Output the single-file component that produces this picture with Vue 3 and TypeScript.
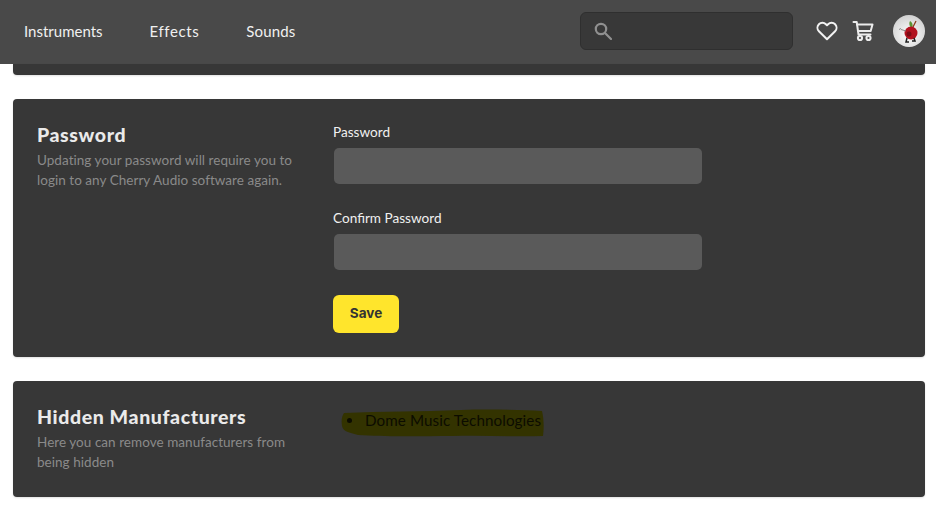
<script setup lang="ts">
const navItems: string[] = ['Instruments', 'Effects', 'Sounds']
</script>

<template>
  <div class="page">
    <header class="topbar">
      <nav class="nav">
        <a v-for="item in navItems" :key="item" class="nav-link">{{ item }}</a>
      </nav>
      <div class="tools">
        <div class="search">
          <svg class="search-icon" viewBox="0 0 18 18" width="18" height="18" fill="none" stroke="#909090" stroke-width="2.2">
            <circle cx="7" cy="7" r="5.2" />
            <path d="M11 11l6 6" stroke-linecap="round" />
          </svg>
        </div>
        <svg class="heart" viewBox="0 0 22 20" width="22" height="20" fill="none" stroke="#f2f2f2" stroke-width="2" stroke-linejoin="round">
          <path d="M11 18.2 2.9 10.2a5 5 0 0 1 0-7 4.9 4.9 0 0 1 7 0L11 4.3l1.1-1.1a4.9 4.9 0 0 1 7 0 5 5 0 0 1 0 7z" />
        </svg>
        <svg class="cart" viewBox="0 0 22 22" width="22" height="22" fill="none" stroke="#ececec" stroke-width="2" stroke-linejoin="round" stroke-linecap="round">
          <path d="M1.5 2h3.2l1.8 12.5h12" />
          <path d="M5 4.5h15.5l-1.8 6.5H6" />
          <circle cx="8" cy="18" r="2.1" />
          <circle cx="16.5" cy="18" r="2.1" />
        </svg>
        <svg class="avatar" viewBox="0 0 32 32" width="32" height="32">
          <defs>
            <radialGradient id="avatarBg" cx="50%" cy="62%" r="60%">
              <stop offset="0%" stop-color="#ffffff" />
              <stop offset="100%" stop-color="#d2d2d2" />
            </radialGradient>
          </defs>
          <circle cx="16" cy="16" r="16" fill="url(#avatarBg)" />
          <path d="M17.5 12c-1.500-2-1.500-4-.5-6 2 1 3 3 2.500 6z" fill="#5b9432" />
          <path d="M20 12l3-6" stroke="#8a3a1a" stroke-width="1.300" />
          <circle cx="18" cy="18" r="6.500" fill="#b2121f" />
          <circle cx="16" cy="19" r="2.500" fill="#7c0c16" />
          <path d="M14 23l-1 4h3M21 23l1 3h-3" stroke="#1f1f1f" stroke-width="1.500" fill="none" />
          <path d="M13 16l-5-1.500M8 13.500l-2 1" stroke="#8a8a8a" stroke-width="1" fill="none" />
        </svg>
      </div>
    </header>

    <main class="content">
      <div class="card stub"></div>

      <section class="card password-card">
        <div class="side">
          <h2>Password</h2>
          <p>Updating your password will require you to login to any Cherry Audio software again.</p>
        </div>
        <form class="form" @submit.prevent>
          <label class="field">
            <span>Password</span>
            <input type="password" />
          </label>
          <label class="field">
            <span>Confirm Password</span>
            <input type="password" />
          </label>
          <button class="save" type="button">Save</button>
        </form>
      </section>

      <section class="card hidden-card">
        <div class="side narrow">
          <h2>Hidden Manufacturers</h2>
          <p>Here you can remove manufacturers from being hidden</p>
        </div>
        <div class="list-col">
          <svg class="blob" viewBox="0 0 204 30" width="204" height="30" preserveAspectRatio="none">
            <path d="M3 5C40 3 80 4 120 2c30-1 60 0 81 1 2 8 2 18 1 25-30 1-60-1-90 0-30 0-70 1-95-1C10 25 2 24 1 18 0 12 1 8 3 5z" fill="#333300" />
          </svg>
          <ul class="makers">
            <li>Dome Music Technologies</li>
          </ul>
        </div>
      </section>
    </main>
  </div>
</template>

<style>
html, body { margin: 0; background: #fff; }
</style>

<style scoped>
.page {
  width: 936px;
  height: 511px;
  overflow: hidden;
  font-family: "Lato", "Open Sans", sans-serif;
}
.topbar {
  height: 64px;
  box-sizing: border-box;
  background: #494949;
  display: flex;
  align-items: center;
  justify-content: space-between;
  padding: 0 11px 2px 24px;
}
.nav { display: flex; gap: 47px; }
.nav-link { color: #f0f0f0; font-size: 15px; }
.nav-link:nth-child(2) { letter-spacing: .6px; }
.nav-link:nth-child(3) { letter-spacing: .15px; }
.tools { display: flex; align-items: center; }
.search {
  width: 213px;
  height: 38px;
  box-sizing: border-box;
  background: #383838;
  border: 1px solid #2f2f2f;
  border-radius: 6px;
  display: flex;
  align-items: center;
  padding-left: 13px;
}
.heart { margin-left: 23px; }
.cart { margin-left: 14px; }
.avatar { margin-left: 19px; }
.content { padding: 0 11px 0 13px; }
.card {
  background: #373737;
  border-radius: 4px;
  color: #eee;
  box-shadow: 0 1px 2px rgba(0,0,0,.12);
}
.stub { height: 11px; border-radius: 0 0 4px 4px; margin-bottom: 24px; }
.password-card {
  height: 258px;
  box-sizing: border-box;
  display: flex;
  padding: 24px;
  margin-bottom: 24px;
}
.hidden-card {
  height: 116px;
  box-sizing: border-box;
  display: flex;
  padding: 24px;
}
.side { width: 296px; flex: none; }
.side h2 { margin: 0 0 3px; font-size: 19.5px; font-weight: 900; line-height: 24px; color: #eaeaea; letter-spacing: .6px; }
.side p { margin: 0; font-size: 13.5px; line-height: 20px; color: #8a8a8a; letter-spacing: .04px; }
.password-card .side p { width: 262px; }
.narrow p { width: 256px; }
.form { display: flex; flex-direction: column; width: 370px; }
.field { display: flex; flex-direction: column; margin-bottom: 25px; }
.field span { font-size: 13.6px; line-height: 20px; color: #f0f0f0; margin-bottom: 6px; margin-top: -1px; }
.field input {
  height: 36px;
  width: 368px;
  margin-left: 1px;
  box-sizing: border-box;
  background: #5a5a5a;
  border: 0;
  border-radius: 5px;
  outline: none;
}
.save {
  width: 66px;
  height: 38px;
  border: 0;
  border-radius: 6px;
  padding: 0 0 2px;
  background: #ffe52c;
  color: #333;
  font: 700 13.5px "Inter", sans-serif;
}
.list-col { position: relative; padding-left: 32px; }
.blob { position: absolute; left: 8px; top: 3px; }
.makers {
  position: relative;
  margin: -1px 0 0 -18px;
  padding: 0;
  list-style: none;
  color: #0c0c00;
  font-size: 15.2px;
  letter-spacing: .09px;
  line-height: 32px;
}
.makers li { display: flex; align-items: center; gap: 13px; }
.makers li::before {
  content: "";
  width: 5px;
  height: 5px;
  border-radius: 50%;
  background: #0c0c00;
}
</style>
